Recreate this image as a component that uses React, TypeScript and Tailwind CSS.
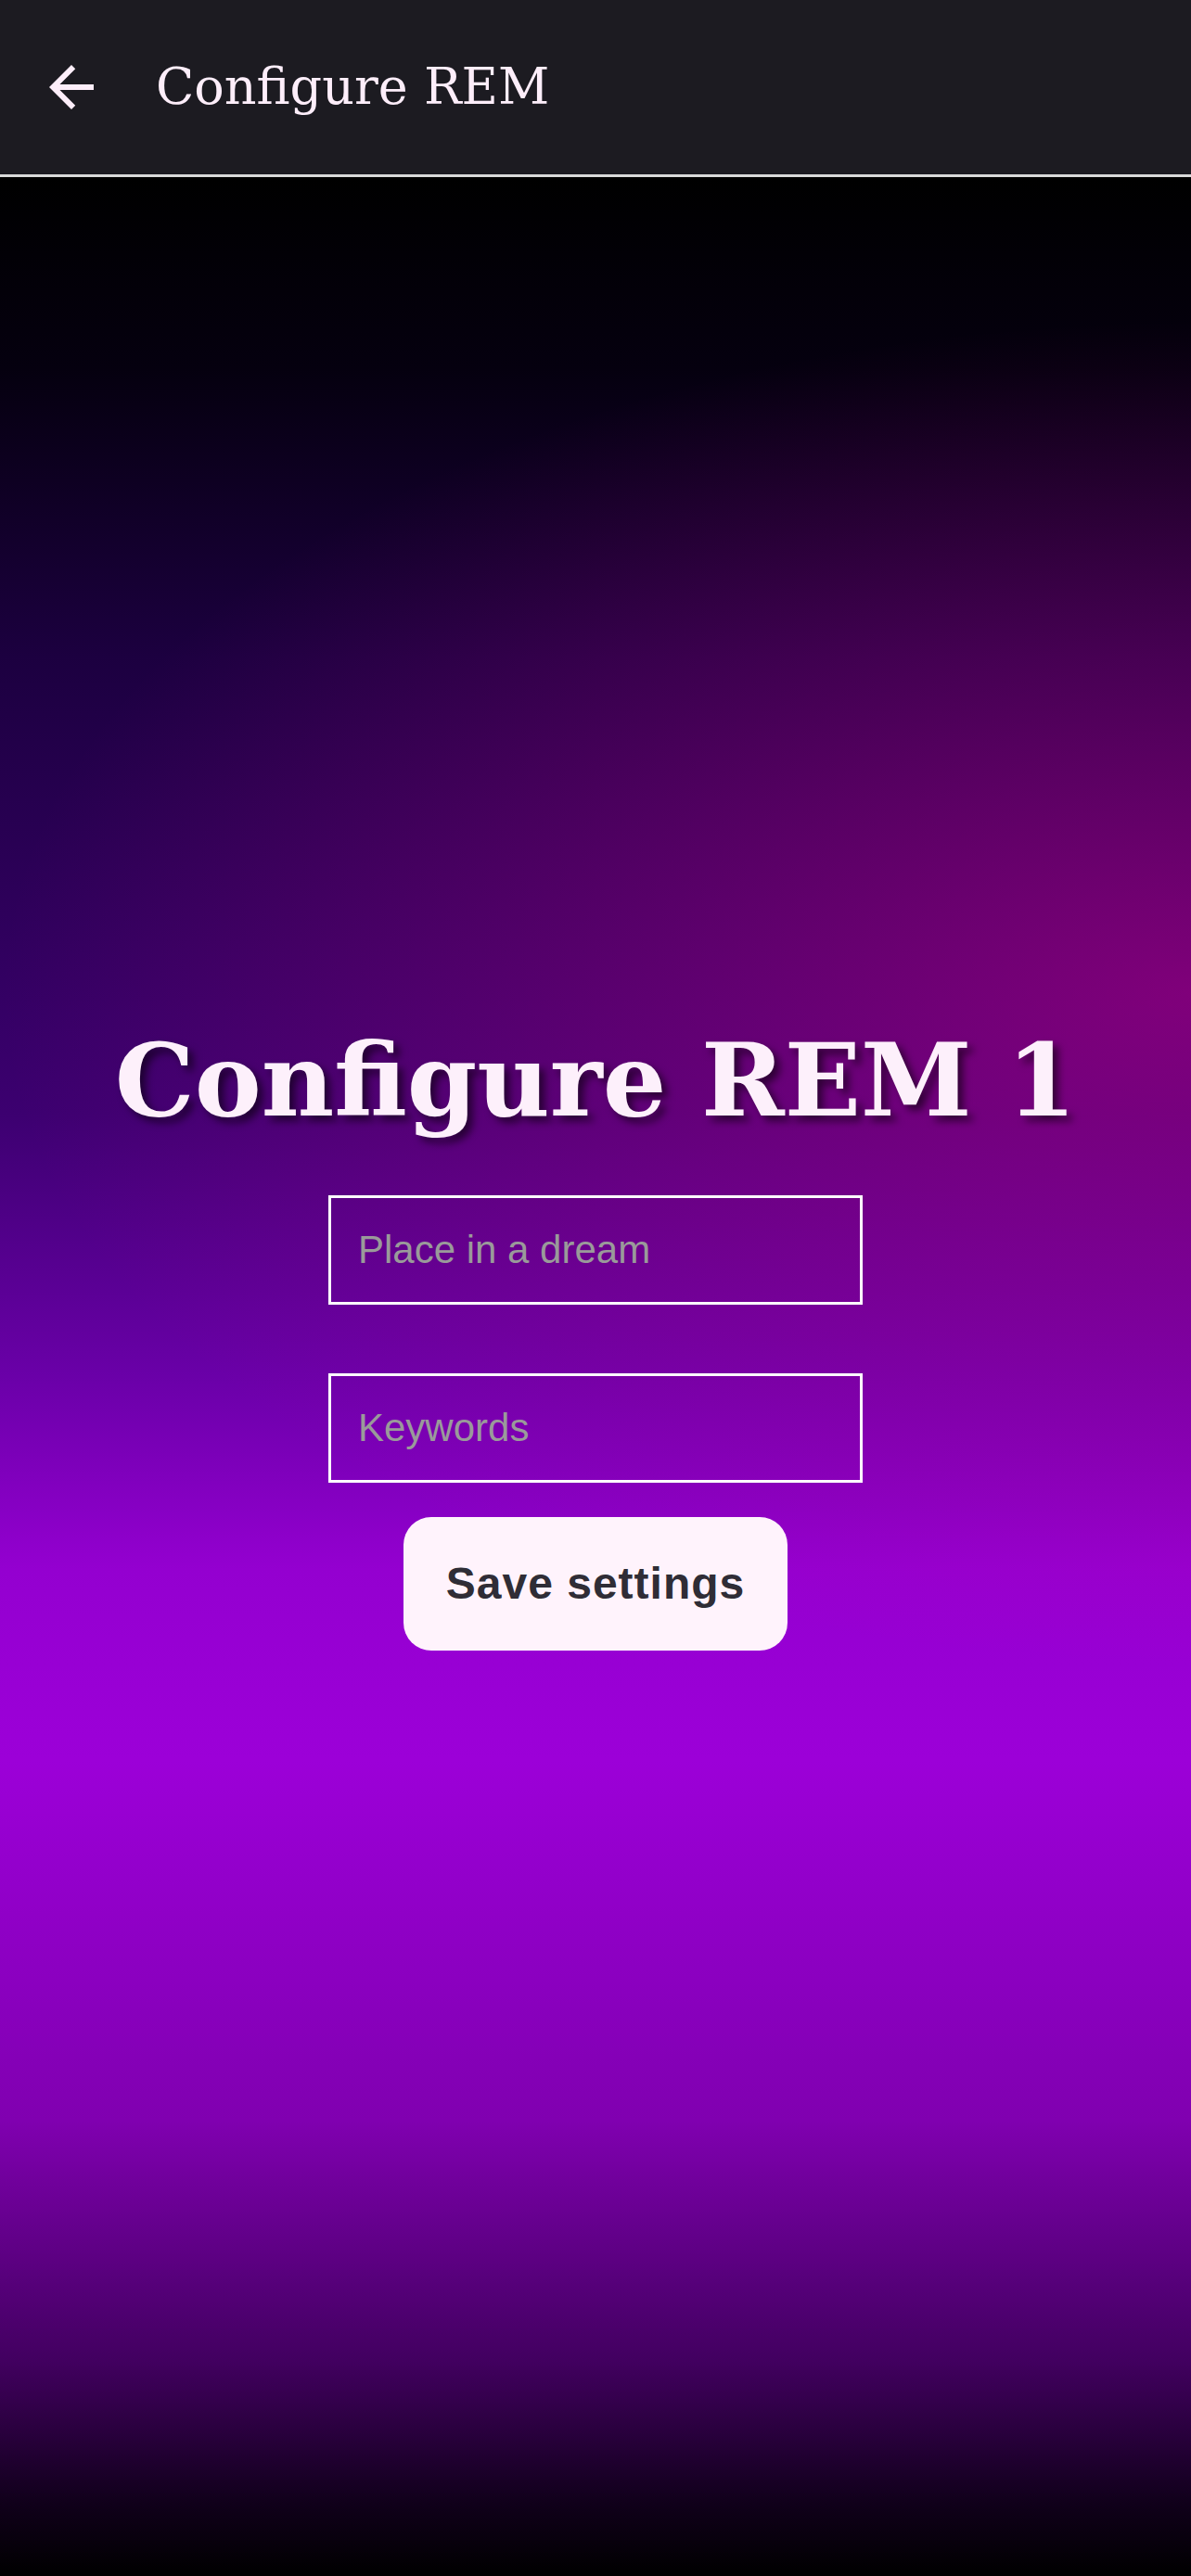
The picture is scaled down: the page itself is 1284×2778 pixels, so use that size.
import { useState } from "react";

export default function App() {
  const [place, setPlace] = useState("");
  const [keywords, setKeywords] = useState("");

  return (
    <div className="min-h-screen flex flex-col bg-black">
      {/* app bar */}
      <header className="h-[191px] flex items-center bg-[#1c1b21] border-b-[3px] border-[#d9d9d9] shrink-0">
        <button className="ml-[41px] w-[72px] h-[72px] flex items-center justify-center">
          <svg width="72" height="72" viewBox="0 0 24 24" fill="#fdeefa">
            <path d="M20 11H7.83l5.59-5.59L12 4l-8 8 8 8 1.41-1.41L7.83 13H20v-2z" />
          </svg>
        </button>
        <h1 className="ml-[55px] text-[54px] leading-none text-[#fdeefa] font-['DejaVu_Serif',serif]">
          Configure REM
        </h1>
      </header>

      {/* content */}
      <main className="flex-1 flex flex-col items-center pt-[920px] bg-[radial-gradient(ellipse_100%_28%_at_100%_34%,rgba(220,0,150,0.45),transparent),linear-gradient(to_bottom,#000_0%,#05000f_8%,#1c0040_20%,#3c0070_39%,#6a00a8_50%,#9400d0_58%,#9c00d8_66%,#8000b0_81%,#420060_91%,#10001a_97%,#000_100%)]">
        <h2 className="text-[108px] leading-none font-bold text-[#fdf0fb] font-['DejaVu_Serif',serif] [text-shadow:6px_6px_8px_rgba(0,0,0,0.55)]">
          Configure REM 1
        </h2>

        <input
          value={place}
          onChange={(e) => setPlace(e.target.value)}
          placeholder="Place in a dream"
          className="mt-[70px] w-[576px] h-[118px] px-[29px] bg-transparent border-[3px] border-white text-[42px] text-white placeholder:text-[#9a9a9a] outline-none font-['Liberation_Sans',sans-serif]"
        />
        <input
          value={keywords}
          onChange={(e) => setKeywords(e.target.value)}
          placeholder="Keywords"
          className="mt-[74px] w-[576px] h-[118px] px-[29px] bg-transparent border-[3px] border-white text-[42px] text-white placeholder:text-[#9a9a9a] outline-none font-['Liberation_Sans',sans-serif]"
        />

        <button className="mt-[37px] w-[414px] h-[144px] rounded-[30px] bg-[#fff3fc] text-[#2f2d36] text-[48px] font-bold tracking-[1px] font-['Liberation_Sans',sans-serif]">
          Save settings
        </button>
      </main>
    </div>
  );
}
